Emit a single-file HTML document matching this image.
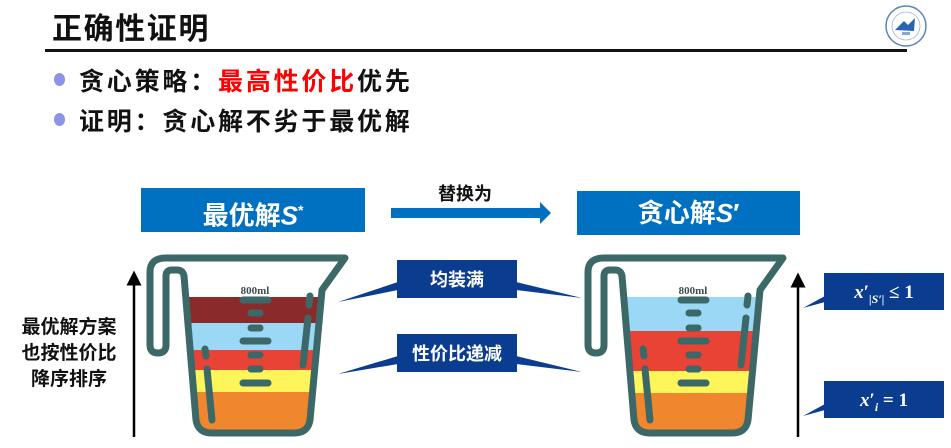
<!DOCTYPE html>
<html><head><meta charset="utf-8"><style>
body{margin:0;width:951px;height:448px;background:#fff;position:relative;overflow:hidden;font-family:"Liberation Sans","Noto Sans CJK SC",sans-serif}
.a{position:absolute;white-space:nowrap}
</style></head><body>
<div class="a" style="left:52px;top:4px;font-size:30px;letter-spacing:1.6px;font-weight:bold;color:#111">正确性证明</div>
<div class="a" style="left:45px;top:49px;width:862px;height:3px;background:#111"></div>
<svg class="a" style="left:884px;top:4px" width="44" height="44" viewBox="0 0 44 44"><circle cx="22" cy="22" r="20" fill="#fff" stroke="#5b86b8" stroke-width="1.5"/><circle cx="22" cy="22" r="14" fill="none" stroke="#9bb4d4" stroke-width="0.8"/><path d="M11 26 L20 17 L24 21 L31 14 L30 27 Z" fill="#2a63b0"/><rect x="18" y="28" width="8" height="3" fill="#8aa6cf"/></svg>
<div class="a" style="left:54px;top:73px;width:11px;height:13px;border-radius:50%;background:#8b94e6"></div>
<div class="a" style="left:54px;top:113px;width:11px;height:13px;border-radius:50%;background:#8b94e6"></div>
<div class="a" style="left:79px;top:62px;font-size:25px;letter-spacing:2.8px;font-weight:bold;color:#111">贪心策略：<span style="color:#f00">最高性价比</span>优先</div>
<div class="a" style="left:79px;top:102px;font-size:25px;letter-spacing:2.8px;font-weight:bold;color:#111">证明：贪心解不劣于最优解</div>

<div class="a" style="left:141px;top:188px;width:224px;height:44px;background:#0070c0;color:#fff;font-size:26px;font-weight:bold;text-align:center;line-height:44px">最优解<i>S</i><sup style="font-size:14px">*</sup></div>
<div class="a" style="left:577px;top:191px;width:223px;height:44px;background:#0070c0;color:#fff;font-size:26px;font-weight:bold;text-align:center;line-height:44px">贪心解<i>S</i>′</div>
<div class="a" style="left:438px;top:180px;font-size:18px;font-weight:bold;color:#111">替换为</div>

<svg class="a" style="left:0;top:0" width="951" height="448">
<defs>
<marker id="ah" markerWidth="6" markerHeight="6" refX="3" refY="3" orient="auto"><path d="M0,0 L6,3 L0,6 Z" fill="#000"/></marker>
</defs>
<path d="M391,208 L540,208 L540,202 L551,213 L540,224 L540,218 L391,218 Z" fill="#0070c0"/>
<line x1="134" y1="437" x2="134" y2="278" stroke="#000" stroke-width="2.5" marker-end="url(#ah)"/>
<line x1="798" y1="437" x2="798" y2="280" stroke="#000" stroke-width="2.5" marker-end="url(#ah)"/>
<polygon points="398,282 338,302 398,290" fill="#0a3d8f"/>
<polygon points="516,282 582,298 516,290" fill="#0a3d8f"/>
<polygon points="398,356 338,374 398,364" fill="#0a3d8f"/>
<polygon points="516,356 582,372 516,364" fill="#0a3d8f"/>
<rect x="397" y="260" width="120" height="38" fill="#0a3d8f"/>
<rect x="397" y="334" width="120" height="38" fill="#0a3d8f"/>
<polygon points="825,296 803,308 825,302" fill="#0a3d8f"/>
<polygon points="825,404 803,416 825,410" fill="#0a3d8f"/>
<rect x="824" y="273" width="120" height="37" fill="#0a3d8f"/>
<rect x="824" y="381" width="120" height="37" fill="#0a3d8f"/>
<text x="457" y="286" fill="#fff" font-size="18" font-weight="bold" text-anchor="middle" font-family="Liberation Sans,Noto Sans CJK SC,sans-serif">均装满</text>
<text x="457" y="360" fill="#fff" font-size="18" font-weight="bold" text-anchor="middle" font-family="Liberation Sans,Noto Sans CJK SC,sans-serif">性价比递减</text>
<text x="884" y="298" fill="#fff" font-size="19" font-weight="bold" text-anchor="middle" font-family="Liberation Serif,serif"><tspan font-style="italic">x</tspan>′<tspan font-size="12" dy="5" font-style="italic">|S′|</tspan><tspan dy="-5"> ≤ 1</tspan></text>
<text x="884" y="406" fill="#fff" font-size="19" font-weight="bold" text-anchor="middle" font-family="Liberation Serif,serif"><tspan font-style="italic">x</tspan>′<tspan font-size="12" dy="5" font-style="italic">i</tspan><tspan dy="-5"> = 1</tspan></text>

<g>
<polygon points="186,297 320,297 318,323 188.5,323" fill="#8b2a2a"/>
<polygon points="188.5,323 318,323 316,350 191,350" fill="#9ad8f5"/>
<polygon points="191,350 316,350 314,370 193,370" fill="#e84334"/>
<polygon points="193,370 314,370 313,392 195,392" fill="#fdf55a"/>
<polygon points="195,392 313,392 309,430 199,430" fill="#f0862d"/>
</g>
<g transform="translate(438,0)">
<polygon points="186,297 320,297 317,331 189,331" fill="#9ad8f5"/>
<polygon points="189,331 317,331 314,371 193,371" fill="#e84334"/>
<polygon points="193,371 314,371 313,393 195,393" fill="#fdf55a"/>
<polygon points="195,393 313,393 309,430 199,430" fill="#f0862d"/>
</g>
<g id="cup" fill="none" stroke="#3d6868" stroke-width="7" stroke-linecap="round" stroke-linejoin="round">
<path d="M150,345 L150,272 Q150,258 166,258 L345,258 L322,290 L310,420 Q308,433 294,433 L212,433 Q198,433 196,420 L184,276 Q183,270 177,270 L172,270 Q166,270 166,276 L166,345 Q166,353 158,353 Q150,353 150,345 Z"/>
<path d="M243,300 L268,300 M251,313 L260,313 M251,328 L260,328 M243,341 L268,341 M251,355 L260,355 M251,369 L260,369 M243,383 L268,383"/>
<path d="M310,296 L309,305 M308,318 L303,365 M205,349 L206,356 M207,369 L212,420"/>
</g>
<use href="#cup" transform="translate(438,0)"/>
<text x="255" y="294" font-size="11" font-weight="bold" fill="#3d4d4d" text-anchor="middle" font-family="Liberation Serif,serif">800ml</text>
<text x="693" y="294" font-size="11" font-weight="bold" fill="#3d4d4d" text-anchor="middle" font-family="Liberation Serif,serif">800ml</text>
</svg>
<div class="a" style="left:14px;top:315px;font-size:19px;font-weight:bold;color:#111;line-height:26px;text-align:center;width:110px">最优解方案<br>也按性价比<br>降序排序</div>
</body></html>
